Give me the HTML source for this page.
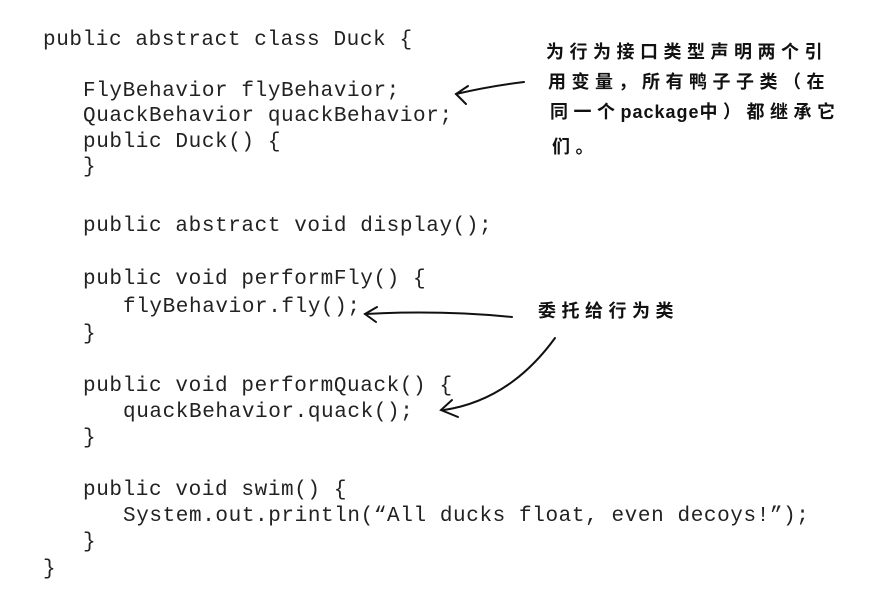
<!DOCTYPE html>
<html><head><meta charset="utf-8"><style>
body{margin:0;background:#fff;width:869px;height:599px;overflow:hidden;position:relative}
.c{position:absolute;font-family:"Liberation Mono",monospace;font-size:21px;letter-spacing:0.6px;color:#222;white-space:pre;line-height:1}
.z{position:absolute;font-family:"Liberation Sans","WenQuanYi Zen Hei","Noto Sans CJK SC",sans-serif;font-size:18px;letter-spacing:5.5px;color:#111;white-space:pre;font-weight:bold}
.z span{letter-spacing:1px}
</style></head><body>
<div class="c" style="left:43px;top:30px">public abstract class Duck {</div>
<div class="c" style="left:83px;top:81px">FlyBehavior flyBehavior;</div>
<div class="c" style="left:83px;top:106px">QuackBehavior quackBehavior;</div>
<div class="c" style="left:83px;top:132px">public Duck() {</div>
<div class="c" style="left:83px;top:157px">}</div>
<div class="c" style="left:83px;top:216px">public abstract void display();</div>
<div class="c" style="left:83px;top:269px">public void performFly() {</div>
<div class="c" style="left:123px;top:297px">flyBehavior.fly();</div>
<div class="c" style="left:83px;top:324px">}</div>
<div class="c" style="left:83px;top:376px">public void performQuack() {</div>
<div class="c" style="left:123px;top:402px">quackBehavior.quack();</div>
<div class="c" style="left:83px;top:428px">}</div>
<div class="c" style="left:83px;top:480px">public void swim() {</div>
<div class="c" style="left:123px;top:506px">System.out.println(“All ducks float, even decoys!”);</div>
<div class="c" style="left:83px;top:532px">}</div>
<div class="c" style="left:43px;top:559px">}</div>
<div class="z" style="left:546px;top:38px">为行为接口类型声明两个引</div>
<div class="z" style="left:548px;top:68px">用变量，所有鸭子子类（在</div>
<div class="z" style="left:550px;top:98px">同一个<span>package</span>中）都继承它</div>
<div class="z" style="left:552px;top:133px">们。</div>
<div class="z" style="left:538px;top:297px">委托给行为类</div>
<svg width="869" height="599" style="position:absolute;left:0;top:0" fill="none" stroke="#111" stroke-width="2" stroke-linecap="round">
<path d="M524 82 Q490 86 456 94"/><path d="M468 86 L456 94 L466 104"/>
<path d="M512 317 Q440 310 365 314"/><path d="M377 307 L365 314 L376 322"/>
<path d="M555 338 Q510 400 444 410"/><path d="M452 400 L441 410 L458 417"/>
</svg>
</body></html>
